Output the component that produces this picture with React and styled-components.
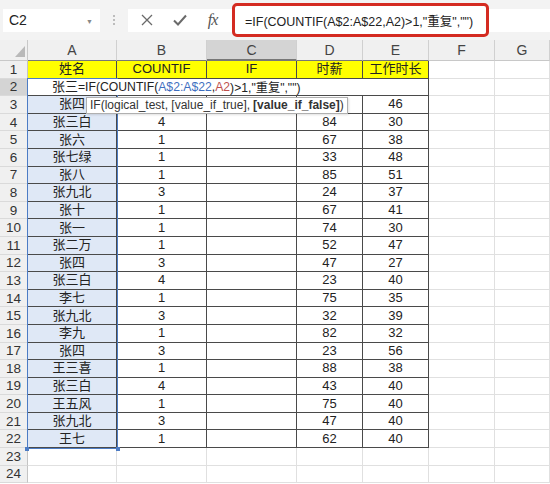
import React from 'react';
import styled, { createGlobalStyle } from 'styled-components';

const FONT = '"Liberation Sans", "Noto Sans CJK SC", sans-serif';
const HEAD_H = 21;
const ROW_H = 17.6;
const DARK = '#4a4a4a';
const LIGHT = '#e0e0e0';
const RANGE = '#4d7cc4';

const GlobalStyle = createGlobalStyle`
  body {
    margin: 0;
    background: #ffffff;
    font-family: ${FONT};
    overflow: hidden;
  }
`;

const Page = styled.div`
  width: 550px;
  height: 484px;
  overflow: hidden;
  background: #ffffff;
`;

const Toolbar = styled.div`
  height: 40px;
  background: #f3f3f3;
  display: flex;
  align-items: center;
  padding-left: 3px;
  box-sizing: border-box;
`;

const NameBox = styled.div`
  width: 97px;
  height: 23px;
  background: #ffffff;
  display: flex;
  align-items: center;
  justify-content: space-between;
  padding: 0 7px 0 6px;
  box-sizing: border-box;
  font-size: 14px;
  color: #222;
`;

const Caret = styled.span`
  font-size: 7px;
  color: #888;
  margin-top: 2px;
`;

const Dots = styled.div`
  width: 28px;
  display: flex;
  flex-direction: column;
  align-items: center;
  gap: 2px;

  span {
    width: 2px;
    height: 2px;
    border-radius: 1px;
    background: #aaa;
  }
`;

const FormulaPanel = styled.div`
  flex: 1;
  height: 23px;
  background: #ffffff;
  display: flex;
  align-items: center;
  padding-left: 2px;
`;

const IconSlot = styled.div`
  width: 33px;
  height: 23px;
  display: flex;
  align-items: center;
  justify-content: center;
`;

const Fx = styled.span`
  font-family: "Liberation Serif", serif;
  font-style: italic;
  font-size: 16px;
  color: #555;
  letter-spacing: -1px;
`;

const FormulaInput = styled.div`
  width: 257px;
  height: 34px;
  margin-left: 3px;
  border: 3px solid #d42b21;
  border-radius: 5px;
  box-sizing: border-box;
  background: #ffffff;
  display: flex;
  align-items: center;
  padding-left: 10px;
  font-size: 12.5px;
  color: #222;
  white-space: nowrap;
`;

const Sheet = styled.div`
  position: relative;
  display: grid;
  grid-template-columns: 28px 89px 90px 90px 66px 66px 66px 55px;
  grid-template-rows: ${HEAD_H}px repeat(24, ${ROW_H}px);
  font-size: 13px;
  color: #222;
`;

const ColHead = styled.div`
  background: ${p => (p.$active ? '#d4d4d4' : '#f0f0f0')};
  border-right: 1px solid #d0d0d0;
  border-bottom: ${p => (p.$active ? '2px solid #777' : `1px solid ${p.$table ? '#777' : '#c8c8c8'}`)};
  box-sizing: border-box;
  display: flex;
  align-items: center;
  justify-content: center;
  font-size: 14px;
  color: #444;
`;

const Corner = styled.div`
  background: #f0f0f0;
  border-right: 1px solid #c8c8c8;
  border-bottom: 1px solid #c8c8c8;
  box-sizing: border-box;
  display: flex;
  align-items: flex-end;
  justify-content: flex-end;
  padding: 0 2px 3px 0;
`;

const RowHead = styled.div`
  background: ${p => (p.$active ? '#d4d4d4' : '#f0f0f0')};
  border-right: 1px solid #c4c4c4;
  border-bottom: 1px solid #dadada;
  box-sizing: border-box;
  display: flex;
  align-items: center;
  justify-content: center;
  font-size: 13.5px;
  color: #333;
`;

const Cell = styled.div`
  background: ${p => p.$bg || '#ffffff'};
  border-right: 1px solid ${p => (p.$table ? DARK : LIGHT)};
  border-bottom: 1px solid ${p => (p.$table ? DARK : LIGHT)};
  box-sizing: border-box;
  display: flex;
  align-items: center;
  justify-content: ${p => p.$justify || 'center'};
  padding-left: ${p => (p.$justify ? '24px' : '0')};
  line-height: 16px;
  white-space: nowrap;
  overflow: hidden;
`;

const EditBox = styled.div`
  position: absolute;
  left: 78px;
  top: ${HEAD_H + ROW_H}px;
  width: 350px;
  height: ${ROW_H - 1}px;
  background: #ffffff;
  z-index: 3;
  box-sizing: border-box;
  display: flex;
  align-items: center;
  font-size: 12.2px;
  white-space: nowrap;
  color: #222;
`;

const Ref = styled.span`
  color: ${p => p.$color};
`;

const Tooltip = styled.div`
  position: absolute;
  left: 86px;
  top: ${HEAD_H + ROW_H * 2 + 0.5}px;
  height: 17px;
  padding: 0 3px;
  background: #ffffff;
  border: 1px solid #b0b0b0;
  box-shadow: 1px 1px 2px rgba(0, 0, 0, 0.12);
  box-sizing: border-box;
  z-index: 4;
  display: flex;
  align-items: center;
  font-size: 12px;
  color: #333;
  white-space: nowrap;

  b {
    font-weight: 700;
    margin-left: 3px;
  }
`;

const RangeBox = styled.div`
  position: absolute;
  left: 27px;
  top: ${HEAD_H + ROW_H - 1}px;
  width: 91px;
  height: ${ROW_H * 21 + 1.5}px;
  border: 1.5px solid ${RANGE};
  box-sizing: border-box;
  z-index: 2;
  pointer-events: none;
`;

const Handle = styled.span`
  position: absolute;
  bottom: -3px;
  ${p => (p.$side === 'left' ? 'left: -3px;' : 'right: -3px;')}
  width: 4px;
  height: 4px;
  background: ${RANGE};
`;

const COLS = ['A', 'B', 'C', 'D', 'E', 'F', 'G'];

// B2:E2 sit under the edit box and B3/D3 under the tooltip, so they stay empty
const rows = [
  ['姓名', 'COUNTIF', 'IF', '时薪', '工作时长'],
  ['张三', '', '', '', ''],
  ['张四', '', '', '', '46'],
  ['张三白', '4', '', '84', '30'],
  ['张六', '1', '', '67', '38'],
  ['张七绿', '1', '', '33', '48'],
  ['张八', '1', '', '85', '51'],
  ['张九北', '3', '', '24', '37'],
  ['张十', '1', '', '67', '41'],
  ['张一', '1', '', '74', '30'],
  ['张二万', '1', '', '52', '47'],
  ['张四', '3', '', '47', '27'],
  ['张三白', '4', '', '23', '40'],
  ['李七', '1', '', '75', '35'],
  ['张九北', '3', '', '32', '39'],
  ['李九', '1', '', '82', '32'],
  ['张四', '3', '', '23', '56'],
  ['王三喜', '1', '', '88', '38'],
  ['张三白', '4', '', '43', '40'],
  ['王五风', '1', '', '75', '40'],
  ['张九北', '3', '', '47', '40'],
  ['王七', '1', '', '62', '40'],
  ['', '', '', '', ''],
  ['', '', '', '', ''],
];

const cellBg = (r, c) => {
  if (r === 0 && c < 5) return '#ffff00';
  if (r >= 2 && r <= 21 && c === 0) return '#dfe8f6';
  return '#ffffff';
};

export default function App() {
  return (
    <Page>
      <GlobalStyle />
      <Toolbar>
        <NameBox>
          C2
          <Caret>▼</Caret>
        </NameBox>
        <Dots>
          <span />
          <span />
          <span />
        </Dots>
        <FormulaPanel>
          <IconSlot>
            <svg width="12" height="12" viewBox="0 0 12 12">
              <path d="M1 1 L11 11 M11 1 L1 11" stroke="#6a6a6a" strokeWidth="1.3" fill="none" />
            </svg>
          </IconSlot>
          <IconSlot>
            <svg width="14" height="12" viewBox="0 0 14 12">
              <path d="M1 6.5 L5 10.5 L13 1.5" stroke="#6a6a6a" strokeWidth="2" fill="none" />
            </svg>
          </IconSlot>
          <IconSlot>
            <Fx>fx</Fx>
          </IconSlot>
          <FormulaInput>=IF(COUNTIF(A$2:A$22,A2)&gt;1,"重复","")</FormulaInput>
        </FormulaPanel>
      </Toolbar>

      <Sheet>
        <Corner>
          <svg width="10" height="11" viewBox="0 0 10 11">
            <polygon points="10,0 10,11 0,11" fill="#b9b9b9" />
          </svg>
        </Corner>
        {COLS.map((c, i) => (
          <ColHead key={c} $active={c === 'C'} $table={i < 5}>
            {c}
          </ColHead>
        ))}
        {rows.map((row, r) => (
          <React.Fragment key={r}>
            <RowHead $active={r === 1}>{r + 1}</RowHead>
            {COLS.map((c, ci) => (
              <Cell
                key={c}
                $bg={cellBg(r, ci)}
                $table={r < 22 && ci < 5}
                $justify={r === 1 && ci === 0 ? 'flex-start' : undefined}
              >
                {ci < 5 ? row[ci] : ''}
              </Cell>
            ))}
          </React.Fragment>
        ))}

        <RangeBox>
          <Handle $side="left" />
          <Handle $side="right" />
        </RangeBox>
        <EditBox>
          =IF(COUNTIF(<Ref $color="#3f6fc0">A$2:A$22</Ref>,<Ref $color="#c0504d">A2</Ref>)&gt;1,"重复","")
        </EditBox>
        <Tooltip>
          IF(logical_test, [value_if_true], <b>[value_if_false]</b>)
        </Tooltip>
      </Sheet>
    </Page>
  );
}
